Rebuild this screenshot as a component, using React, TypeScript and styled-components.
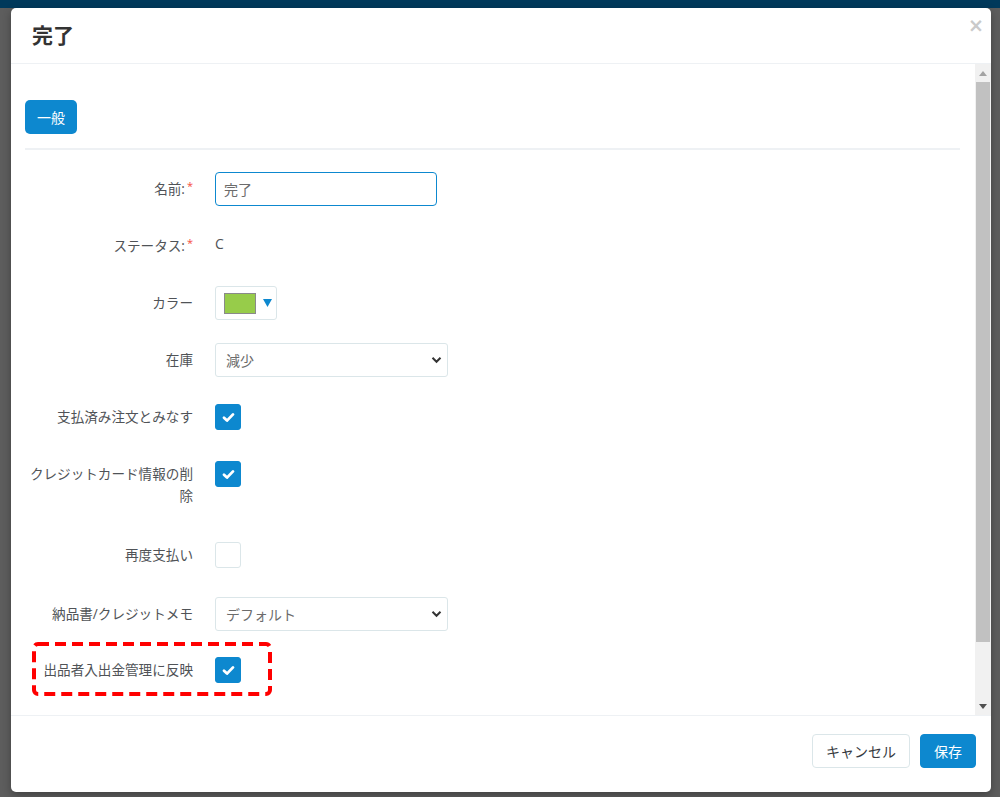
import * as React from 'react'
import styled, { createGlobalStyle } from 'styled-components'

const blue = '#0d88cf'
const ink = '#363a41'
const soft = '#505357'
const line = '#eef1f4'

const GlobalStyle = createGlobalStyle`
  html, body {
    margin: 0;
    padding: 0;
    height: 100%;
    overflow: hidden;
  }
  body {
    font-family: "Open Sans", "Noto Sans CJK JP", sans-serif;
    color: ${ink};
  }
  * {
    box-sizing: border-box;
  }
`

const Backdrop = styled.div`
  height: 100vh;
  background: #5d5d5d;
  border-top: 8px solid #00395b;
  padding: 0 9px 5px 11px;
  display: flex;
`

const Modal = styled.div`
  flex: 1;
  display: flex;
  flex-direction: column;
  background: #fff;
  border-radius: 5px;
  box-shadow: 0 3px 9px rgba(0, 0, 0, 0.3);
  overflow: hidden;
`

const Header = styled.div`
  height: 56px;
  flex-shrink: 0;
  display: flex;
  align-items: center;
  justify-content: space-between;
  padding: 0 7px 0 21px;
  border-bottom: 1px solid ${line};
`

const Title = styled.h4`
  margin: 0;
  font-size: 21px;
  font-weight: bold;
  color: #333;
  line-height: 1;
`

const Close = styled.button`
  align-self: flex-start;
  margin-top: 8px;
  padding: 0;
  border: none;
  background: none;
  font-family: "DejaVu Sans", sans-serif;
  font-size: 19px;
  font-weight: bold;
  color: #cacaca;
  line-height: 1;
  cursor: pointer;
`

const Body = styled.div`
  flex: 1;
  display: flex;
  overflow: hidden;
`

const Content = styled.div`
  flex: 1;
  padding: 36px 15px 34px 14px;
`

const ScrollTrack = styled.div`
  width: 16px;
  flex-shrink: 0;
  display: flex;
  flex-direction: column;
  background: #f1f1f1;
`

const ScrollArrow = styled.div`
  height: 18px;
  display: flex;
  align-items: center;
  justify-content: center;
`

const ScrollThumb = styled.div`
  height: 560px;
  margin: 0 1px;
  background: #c1c1c1;
`

const Spacer = styled.div`
  flex: 1;
`

const TabButton = styled.button`
  height: 34px;
  padding: 0 12px;
  border: none;
  border-radius: 5px;
  background: ${blue};
  color: #fff;
  font-family: inherit;
  font-size: 14px;
`

const Separator = styled.hr`
  margin: 14px 0 22px;
  height: 2px;
  border: none;
  background: ${line};
`

const Row = styled.div<{ $gap?: number }>`
  position: relative;
  display: flex;
  align-items: flex-start;
  gap: 22px;
  margin-bottom: ${p => p.$gap ?? 23}px;
`

const Label = styled.label`
  width: 168px;
  flex-shrink: 0;
  padding: 6px 0;
  text-align: right;
  font-size: 13.6px;
  line-height: 22px;
  color: ${soft};
`

const Required = styled.span`
  position: relative;
  top: -4px;
  margin-left: 2px;
  color: #f54c3e;
  font-size: 11px;
  line-height: 0;
`

const Static = styled.div`
  padding: 4px 0 8px;
  font-size: 14px;
  line-height: 22px;
  color: ${soft};
`

const TextInput = styled.input`
  width: 222px;
  height: 34px;
  padding: 0 8px;
  border: 1px solid ${blue};
  border-radius: 4px;
  font-family: inherit;
  font-size: 14px;
  color: #6c6c6c;
  outline: none;
`

const SelectWrap = styled.div`
  position: relative;
  width: 233px;
  height: 34px;

  svg {
    position: absolute;
    right: 6px;
    top: 13px;
    pointer-events: none;
  }
`

const Select = styled.select`
  width: 100%;
  height: 100%;
  padding: 0 10px;
  appearance: none;
  border: 1px solid #dbe6e9;
  border-radius: 3px;
  background: #fff;
  font-family: inherit;
  font-size: 14px;
  color: #6c6c6c;
`

const ColorPicker = styled.div`
  width: 62px;
  height: 34px;
  display: flex;
  align-items: center;
  gap: 7px;
  padding-left: 8px;
  border: 1px solid #dbe6e9;
  border-radius: 3px;
  background: #fff;
`

const Swatch = styled.span<{ $color: string }>`
  width: 32px;
  height: 21px;
  background: ${p => p.$color};
  border: 1px solid #8a8a8a;
`

const CheckBox = styled.span<{ $checked?: boolean }>`
  width: 26px;
  height: 26px;
  margin-top: 4px;
  display: flex;
  align-items: center;
  justify-content: center;
  border-radius: 3px;
  border: 1px solid ${p => (p.$checked ? blue : '#dbe6e9')};
  background: ${p => (p.$checked ? blue : '#fff')};
`

const Marker = styled.svg`
  position: absolute;
  left: 7px;
  top: -11px;
  overflow: visible;
`

const Footer = styled.div`
  height: 77px;
  flex-shrink: 0;
  display: flex;
  align-items: center;
  justify-content: flex-end;
  gap: 10px;
  padding: 0 15px 6px;
  border-top: 1px solid ${line};
`

const Button = styled.button<{ $primary?: boolean }>`
  height: 34px;
  padding: 0 13px;
  border-radius: 4px;
  border: 1px solid ${p => (p.$primary ? blue : '#dbe6e9')};
  background: ${p => (p.$primary ? blue : '#fff')};
  color: ${p => (p.$primary ? '#fff' : ink)};
  font-family: inherit;
  font-size: 14px;
`

const Check = () => (
  <svg width="13" height="11" viewBox="0 0 13 11">
    <path d="M2 5.8 L5 8.6 L11 2.4" fill="none" stroke="#fff" strokeWidth="2.8" strokeLinecap="round" strokeLinejoin="round" />
  </svg>
)

const Chevron = () => (
  <svg width="11" height="8" viewBox="0 0 11 8">
    <path d="M1.5 1.8 L5.5 5.8 L9.5 1.8" fill="none" stroke="#333" strokeWidth="2" />
  </svg>
)

const Caret = () => (
  <svg width="9" height="8" viewBox="0 0 9 8">
    <path d="M0 0 H9 L4.5 8 Z" fill={blue} />
  </svg>
)

const Arrow = ({ down }: { down?: boolean }) => (
  <svg width="8" height="5" viewBox="0 0 8 5">
    <path d={down ? 'M0 0 H8 L4 5 Z' : 'M0 5 H8 L4 0 Z'} fill={down ? '#505050' : '#a3a3a3'} />
  </svg>
)

export default function App() {
  return (
    <>
      <GlobalStyle />
      <Backdrop>
        <Modal>
          <Header>
            <Title>完了</Title>
            <Close>×</Close>
          </Header>

          <Body>
            <Content>
              <TabButton>一般</TabButton>
              <Separator />

              <Row>
                <Label>名前:<Required>*</Required></Label>
                <TextInput defaultValue="完了" />
              </Row>

              <Row>
                <Label>ステータス:<Required>*</Required></Label>
                <Static>C</Static>
              </Row>

              <Row>
                <Label>カラー</Label>
                <ColorPicker>
                  <Swatch $color="#97cc4a" />
                  <Caret />
                </ColorPicker>
              </Row>

              <Row>
                <Label>在庫</Label>
                <SelectWrap>
                  <Select defaultValue="減少">
                    <option>減少</option>
                  </Select>
                  <Chevron />
                </SelectWrap>
              </Row>

              <Row>
                <Label>支払済み注文とみなす</Label>
                <CheckBox $checked><Check /></CheckBox>
              </Row>

              <Row $gap={25}>
                <Label>クレジットカード情報の削除</Label>
                <CheckBox $checked><Check /></CheckBox>
              </Row>

              <Row $gap={25}>
                <Label>再度支払い</Label>
                <CheckBox />
              </Row>

              <Row $gap={22}>
                <Label>納品書/クレジットメモ</Label>
                <SelectWrap>
                  <Select defaultValue="デフォルト">
                    <option>デフォルト</option>
                  </Select>
                  <Chevron />
                </SelectWrap>
              </Row>

              <Row>
                <Label>出品者入出金管理に反映</Label>
                <CheckBox $checked><Check /></CheckBox>
                <Marker width="240" height="54">
                  <rect x="2" y="2" width="236" height="50" rx="4" fill="none" stroke="#f00" strokeWidth="4" strokeDasharray="11 6" />
                </Marker>
              </Row>
            </Content>

            <ScrollTrack>
              <ScrollArrow><Arrow /></ScrollArrow>
              <ScrollThumb />
              <Spacer />
              <ScrollArrow><Arrow down /></ScrollArrow>
            </ScrollTrack>
          </Body>

          <Footer>
            <Button>キャンセル</Button>
            <Button $primary>保存</Button>
          </Footer>
        </Modal>
      </Backdrop>
    </>
  )
}
